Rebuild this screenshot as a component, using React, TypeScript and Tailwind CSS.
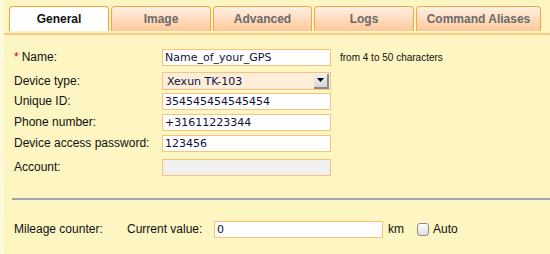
import React from "react";

const lbl = "text-[12px] leading-[15px] text-[#111]";
const inputCls =
  "h-[17px] w-[169px] border border-[#fbc27c] bg-white px-[2px] text-[11px] leading-[15px] text-[#10103a] [font-family:'DejaVu_Sans',sans-serif] overflow-hidden whitespace-nowrap";

function Tab({ label, w, active }: { label: string; w: number; active?: boolean }) {
  return (
    <div
      style={{ width: w }}
      className={
        "h-[25px] flex items-center justify-center rounded-t-[4px] border border-b-0 text-[12px] leading-[15px] font-bold " +
        (active
          ? "bg-white border-[#f6a040] text-[#111]"
          : "bg-gradient-to-b from-[#fff1e4] to-[#fdc898] border-[#f6a448] text-[#6a6a6a]")
      }
    >
      {label}
    </div>
  );
}

function Row({ label, star, children, mt }: { label: string; star?: boolean; children: React.ReactNode; mt: string }) {
  return (
    <div className={"flex items-center " + mt}>
      <div className={"w-[148px] " + lbl}>
        {star && <span className="text-[#e00000] mr-[3px]">*</span>}
        {label}
      </div>
      {children}
    </div>
  );
}

export default function App() {
  return (
    <div className="w-[550px] h-[254px] flex bg-[#fdf6c2] [font-family:'Liberation_Sans',Arial,sans-serif] overflow-hidden">
      <div className="w-[4px] h-full bg-[#fefad8]" />
      <div className="flex-1 flex flex-col">
        <div className="flex gap-[2px] pl-[5px] pt-[6px]">
          <Tab label="General" w={100} active />
          <Tab label="Image" w={100} />
          <Tab label="Advanced" w={99} />
          <Tab label="Logs" w={100} />
          <Tab label="Command Aliases" w={125} />
        </div>
        <div className="mt-[2px] h-[2px] bg-[#fccb82]" />
        <div className="pl-[10px] flex flex-col">
          <Row label="Name:" star mt="mt-[14px]">
            <div className={inputCls}>Name_of_your_GPS</div>
            <span className="ml-[9px] text-[10px] leading-[12px] text-[#111]">from 4 to 50 characters</span>
          </Row>
          <Row label="Device type:" mt="mt-[6px]">
            <div className="h-[18px] w-[169px] border border-[#fbc27c] bg-[#fdeedc] flex items-center">
              <span className="pl-[4px] flex-1 text-[11px] leading-[15px] text-[#10103a] [font-family:'DejaVu_Sans',sans-serif]">
                Xexun TK-103
              </span>
              <div className="w-[15px] h-[15px] mr-[1px] bg-gradient-to-b from-[#f2f2f2] to-[#d6d6d6] border-r-2 border-b-2 border-[#8a8a8a] flex items-center justify-center">
                <svg width="7" height="4" viewBox="0 0 7 4">
                  <polygon points="0,0 7,0 3.5,4" fill="#000" />
                </svg>
              </div>
            </div>
          </Row>
          <Row label="Unique ID:" mt="mt-[3px]">
            <div className={inputCls}>354545454545454</div>
          </Row>
          <Row label="Phone number:" mt="mt-[4px]">
            <div className={inputCls}>+31611223344</div>
          </Row>
          <Row label="Device access password:" mt="mt-[4px]">
            <div className={inputCls}>123456</div>
          </Row>
          <Row label="Account:" mt="mt-[7px]">
            <div className={inputCls + " !bg-[#f0f0f0]"} />
          </Row>
        </div>
        <div className="ml-[8px] mt-[22px] h-[2px] bg-[#a3a3aa]" />
        <div className="pl-[10px] mt-[21px] flex items-center">
          <span className={"w-[113px] " + lbl}>Mileage counter:</span>
          <span className={"w-[87px] " + lbl}>Current value:</span>
          <div className={inputCls}>0</div>
          <span className={"ml-[5px] " + lbl}>km</span>
          <div className="ml-[13px] w-[12px] h-[13px] rounded-[3px] border border-[#8c8c8c] bg-gradient-to-b from-[#ffffff] to-[#dedede]" />
          <span className={"ml-[4px] " + lbl}>Auto</span>
        </div>
      </div>
    </div>
  );
}
